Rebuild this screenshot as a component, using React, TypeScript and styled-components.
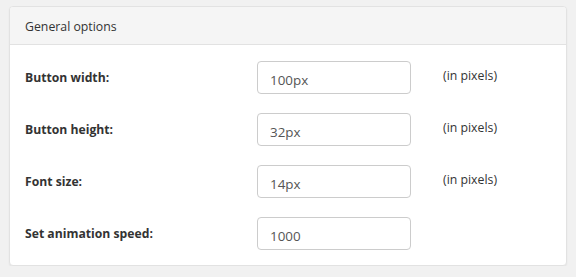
import React from "react";
import styled, { createGlobalStyle } from "styled-components";

const GlobalStyle = createGlobalStyle`
  body {
    margin: 0;
    background: #f1f1f1;
    font-family: "Open Sans", "Liberation Sans", sans-serif;
  }
`;

// 設定項目
const options = [
  { label: "Button width:", value: "100px", hint: "(in pixels)" },
  { label: "Button height:", value: "32px", hint: "(in pixels)" },
  { label: "Font size:", value: "14px", hint: "(in pixels)" },
  { label: "Set animation speed:", value: "1000", hint: "" },
];

const App: React.FC = () => {
  return (
    <Page>
      <GlobalStyle />
      <Panel>
        <PanelHeader>General options</PanelHeader>
        <PanelBody>
          {options.map((opt) => (
            <Row key={opt.label}>
              <Label>{opt.label}</Label>
              <TextInput defaultValue={opt.value} />
              {opt.hint && <Hint>{opt.hint}</Hint>}
            </Row>
          ))}
        </PanelBody>
      </Panel>
    </Page>
  );
};
export default App;

const Page = styled.div`
  padding: 6px 9px 0 9px;
`;

const Panel = styled.div`
  width: 558px;
  box-sizing: border-box;
  background: #fff;
  border: 1px solid #e2e2e2;
  border-radius: 4px;
  box-shadow: 0 1px 2px rgba(0, 0, 0, 0.06);
  overflow: hidden;
`;

const PanelHeader = styled.div`
  height: 38px;
  box-sizing: border-box;
  padding: 2px 15px 0 15px;
  display: flex;
  align-items: center;
  background: #f5f5f5;
  border-bottom: 1px solid #e2e2e2;
  font-size: 12.3px;
  color: #333;
`;

const PanelBody = styled.div`
  padding: 16px 15px 15px 15px;
  display: flex;
  flex-direction: column;
  gap: 19px;
`;

const Row = styled.div`
  display: flex;
  align-items: center;
  height: 33px;
`;

const Label = styled.label`
  width: 232px;
  font-size: 12.2px;
  font-weight: bold;
  color: #333;
`;

const TextInput = styled.input`
  width: 154px;
  height: 33px;
  box-sizing: border-box;
  padding: 4px 12px 0 12px;
  border: 1px solid #ccc;
  border-radius: 4px;
  font-family: inherit;
  font-size: 13.4px;
  color: #555;
  outline: none;
`;

const Hint = styled.span`
  margin-left: 32px;
  margin-top: -5px;
  font-size: 12.3px;
  color: #333;
`;
